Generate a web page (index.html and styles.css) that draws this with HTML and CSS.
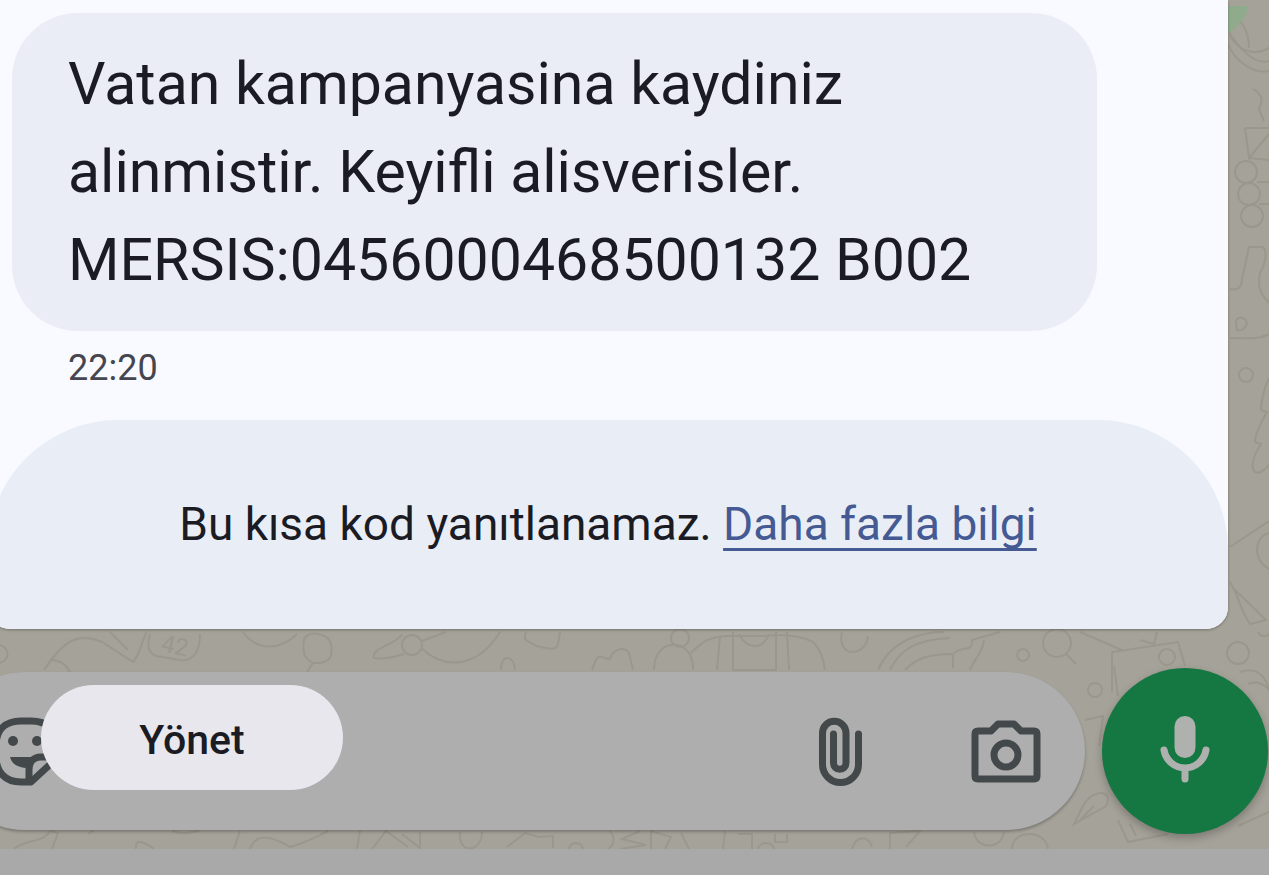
FILE: index.html
```html
<!DOCTYPE html>
<html lang="tr">
<head>
    <meta charset="UTF-8">
    <meta name="viewport" content="width=device-width, initial-scale=1">
    <title>Mesaj</title>
    <link rel="stylesheet" href="styles.css">
</head>
<body>

    <div class="chat">
        <svg class="wallpaper" viewBox="0 0 1269 849" preserveAspectRatio="xMaxYMin slice" aria-hidden="true">
            <!-- right strip -->
            <path class="leaf" d="M1228 6h19c2 9-8 20-19 28z"/>
            <path d="M1230 36c10 16 24 20 39 12M1228 44c8 20 28 30 41 27M1229 32c7 12 24 34 40 29M1241 22c6 8 8 16 8 26"/>
            <path d="M1253 89c10 6 10 10 6 20l5 12M1245 128h24M1245 128l4 30 20-24M1249 158l20 2M1257 182h12M1259 204h10"/>
            <circle cx="1246" cy="172" r="11"/>
            <circle cx="1249" cy="194" r="11"/>
            <circle cx="1252" cy="216" r="11"/>
            <path d="M1230 289c8 2 12-2 12-10l7-32h13c6 2 4 16-2 26-2 12-2 18 9 30M1236 322c0-6 10-6 11 2-2 4-6 8-10 6zM1230 338c16 0 28 2 39-4"/>
            <circle cx="1246" cy="375" r="7"/>
            <path d="M1269 378c-5 10-8 24-8 32l6 2c-8 14-12 24-12 30l6 2c-8 12-10 22-7 27 4 4 10 0 15-6M1230 547l39-26M1230 582c8 12 12 32 20 42l16-4-34-33M1269 533c-16 4-16 28 0 36"/>
            <!-- strip between the sheet and the message box -->
            <path d="M0 645c10 4 10 14 0 18M44 670c20-30 34-38 58-28l31 20c10-12 8-22 14-30M50 660c10 0 16 4 20 12M110 632l18 18M150 634c-4 14 0 20 6 22l24 4c14 2 20-10 20-26"/>
            <text x="160" y="651" transform="rotate(12 160 651)">42</text>
            <path d="M243 632c14 20 38 18 54 2M304 640c2-10 24-8 27 4 2 14-2 18-12 19s-18-6-15-23zM313 663l-6 9M374 658c-4-10 24-14 28-24M374 658c12 2 22-2 30-4M422 641l24-9M421 648c26 24 58 18 79-16"/>
            <circle cx="412" cy="645" r="10"/>
            <path d="M526 632c-4 12 4 8 10 14 10 2 20 6 22-2l2-12M501 670c0-18 14-14 14 0M592 670c4-12 6-16 12-12l6 1c4-12 16-12 19-6l4 17M654 670c0-34 40-34 39 0M691 653c10-10 16-16 36-17h38c16-2 32-2 48 6 8 8 10 16 12 28M720 636l-3 34M733 632v38h43v-38M739 634c8 16 24 16 30 0M787 632l2 38"/>
            <circle cx="680" cy="638" r="9"/>
            <path d="M842 632c-6 26 24 26 26 4M878 670c12-28 40-38 66-38M890 670c10-20 24-30 60-32M952 656c6-12 22-2 20-16l28-8M905 670c10-10 20-16 48-16v14M970 670c4-12 12-14 14-30"/>
            <circle cx="1023" cy="655" r="6"/>
            <circle cx="1057" cy="643" r="14"/>
            <path d="M1066 654l10 10M1080 632l44 19M1140 640l14 4 3-12M1112 692v-40l66-10 7 24M1118 696l-4-30"/>
            <circle cx="1167" cy="657" r="8"/>
            <circle cx="1238" cy="653" r="11"/>
            <circle cx="1095" cy="690" r="7"/>
            <path d="M1085 720l18-4-4 30M1074 824l10-20c10-16 30-14 22 2zM1094 806l-14 14M1118 820l10 22 40-8M1130 824l6 12M1240 672c16-6 26 4 29 18M1248 684c8-4 16 0 21 6M1258 632c2 4 8 6 11 2M1238 826l31-14"/>
            <!-- strip below the message box -->
            <path d="M14 849c10-10 30-6 36-18l8 2-6 16M88 834l6-4M136 849c-2-12 10-6 18 0M172 831c10 4 20 2 28-1M234 849l6-18M250 849c6-16 20-14 40-2 20-6 30-12 38-16M360 830l-3 19M372 849l14-18 22 16M402 834l18 14v-16"/>
            <path d="M460 832c-2 24 22 20 22 0M507 847l18-14 14 4 14-1v12M569 849c2-8 12-8 14 0M610 831c6 8 4 14-2 18M640 831l-18 8 24 6-26 4M651 849v-18l20 6-6 12M681 833l8 16M723 849l2-18M738 834h14v15M775 834v8h12v-8M758 849c2-8 14-8 16 0M852 849c4-14 16-14 20-2M890 849v-16l30-2-14 16M974 832c2 18 28 18 30 0M1012 849c0-20 34-20 36 0"/>
        </svg>

        <main class="sheet">
            <p class="bubble">Vatan kampanyasina kaydiniz alinmistir. Keyifli alisverisler. MERSIS:0456000468500132 B002</p>
            <time class="time" datetime="22:20">22:20</time>
            <p class="notice">Bu kısa kod yanıtlanamaz. <a href="#">Daha fazla bilgi</a></p>
        </main>

        <form class="composer">
            <div class="message-box">
                <button type="button" class="icon-button emoji" aria-label="Emoji">
                    <svg viewBox="0 0 70 70">
                        <path d="M40 66H30C14 66 5 56 5 40V30C5 14 14 5 30 5h10c16 0 26 9 26 25v12z"/>
                        <path class="fill" d="M19 41h28l-9 11c-10 0-17-3-19-11z"/>
                        <path d="M38 65V54c0-8 4-13 12-13h15"/>
                        <circle class="fill" cx="22" cy="25" r="5"/>
                        <circle class="fill" cx="46" cy="25" r="5"/>
                    </svg>
                </button>
                <input type="text" class="message-input" aria-label="Mesaj">
                <button type="button" class="icon-button" aria-label="Dosya ekle">
                    <svg viewBox="0 0 70 70">
                        <path d="M53.5 18v30.500a18 18 0 0 1-36 0V17a11.700 11.700 0 0 1 23.500 0v30a6.200 6.200 0 0 1-12.500 0V18"/>
                    </svg>
                </button>
                <button type="button" class="icon-button" aria-label="Kamera">
                    <svg viewBox="0 0 70 70">
                        <path d="M7 15h13l7-7h16l7 7h13q3 0 3 3v42q0 3-3 3H7q-3 0-3-3V18q0-3 3-3z"/>
                        <circle cx="35" cy="39" r="12"/>
                    </svg>
                </button>
            </div>
            <button type="button" class="mic" aria-label="Sesli mesaj">
                <svg viewBox="0 0 70 70">
                    <rect x="24.500" y="0" width="21" height="42" rx="10.500"/>
                    <path d="M14 34c2 11 11 18 21 18s19-7 21-18M35 52v11"/>
                </svg>
            </button>
            <button type="button" class="manage">Yönet</button>
        </form>
    </div>

</body>
</html>
```

FILE: styles.css
```css
* {
    box-sizing: border-box;
}

body {
    font-family: Roboto, "Liberation Sans", sans-serif;
    margin: 0;
    min-height: 100vh;
    background-color: #a9a9a9;
    color: #1b1b23;
    overflow-x: hidden;
}

.chat {
    position: relative;
    background-color: #a5a299;
    overflow: hidden;
}

.wallpaper {
    position: absolute;
    top: 0;
    left: 0;
    width: 100%;
    height: 100%;
    fill: none;
    stroke: #9b978d;
    stroke-width: 2;
}

.wallpaper .leaf {
    fill: #8fab8c;
    stroke: none;
}

.wallpaper text {
    fill: #9b978d;
    stroke: none;
    font-size: 24px;
}

.sheet {
    position: relative;
    margin: 0 41px 0 -12px;
    padding-top: 13px;
    background-color: #f9faff;
    border-radius: 0 0 22px 22px;
    box-shadow: 0 1px 3px rgba(0, 0, 0, 0.3);
    overflow: hidden;
}

.bubble {
    margin: 0 131px 0 24px;
    padding: 27px 56px;
    background-color: #eaedf6;
    border-radius: 66px;
    font-size: 59px;
    line-height: 88px;
}

.time {
    display: block;
    margin: 16px 80px 31px;
    color: #45464f;
    font-size: 36px;
    line-height: 42px;
}

.notice {
    margin: 0;
    padding: 76px 24px;
    background-color: #e9edf6;
    border-radius: 130px 130px 0 0;
    font-size: 46px;
    line-height: 57px;
    text-align: center;
}

.notice a {
    color: #455a92;
    text-decoration-thickness: 3px;
    text-underline-offset: 8px;
    text-decoration-skip-ink: none;
}

button {
    border: none;
    padding: 0;
    cursor: pointer;
    font-family: inherit;
}

.composer {
    position: relative;
    display: flex;
    align-items: center;
    gap: 17px;
    margin-left: -54px;
    padding: 39px 1px 15px 0;
}

.message-box {
    flex: 1;
    display: flex;
    align-items: center;
    height: 158px;
    padding: 0 44px 0 45px;
    background-color: #aeaeae;
    border-radius: 79px;
    box-shadow: 0 2px 3px rgba(0, 0, 0, 0.25);
}

.message-input {
    flex: 1;
    min-width: 0;
    height: 100%;
    border: none;
    outline: none;
    background: none;
    font-family: inherit;
    font-size: 46px;
}

.icon-button {
    height: 70px;
    margin-left: 96px;
    background: none;
}

.icon-button.emoji {
    margin-left: 0;
}

.icon-button svg {
    display: block;
    width: 70px;
    height: 70px;
    fill: none;
    stroke: #43494b;
    stroke-width: 7;
    stroke-linecap: round;
    stroke-linejoin: round;
}

.icon-button .fill {
    fill: #43494b;
    stroke: none;
}

.mic {
    display: flex;
    align-items: center;
    justify-content: center;
    width: 166px;
    height: 166px;
    background-color: #157742;
    border-radius: 50%;
    box-shadow: 0 4px 8px rgba(0, 0, 0, 0.25);
}

.mic svg {
    width: 70px;
    height: 70px;
    fill: none;
    stroke: #afb1af;
    stroke-width: 7;
    stroke-linecap: round;
}

.mic rect {
    fill: #afb1af;
    stroke: none;
}

/* floats over the message box */
.manage {
    position: absolute;
    top: 56px;
    left: 95px;
    width: 302px;
    height: 105px;
    padding-top: 4px;
    background-color: #e8e7ee;
    border-radius: 53px;
    color: #1b1b23;
    font-size: 41px;
    font-weight: 500;
}
```
